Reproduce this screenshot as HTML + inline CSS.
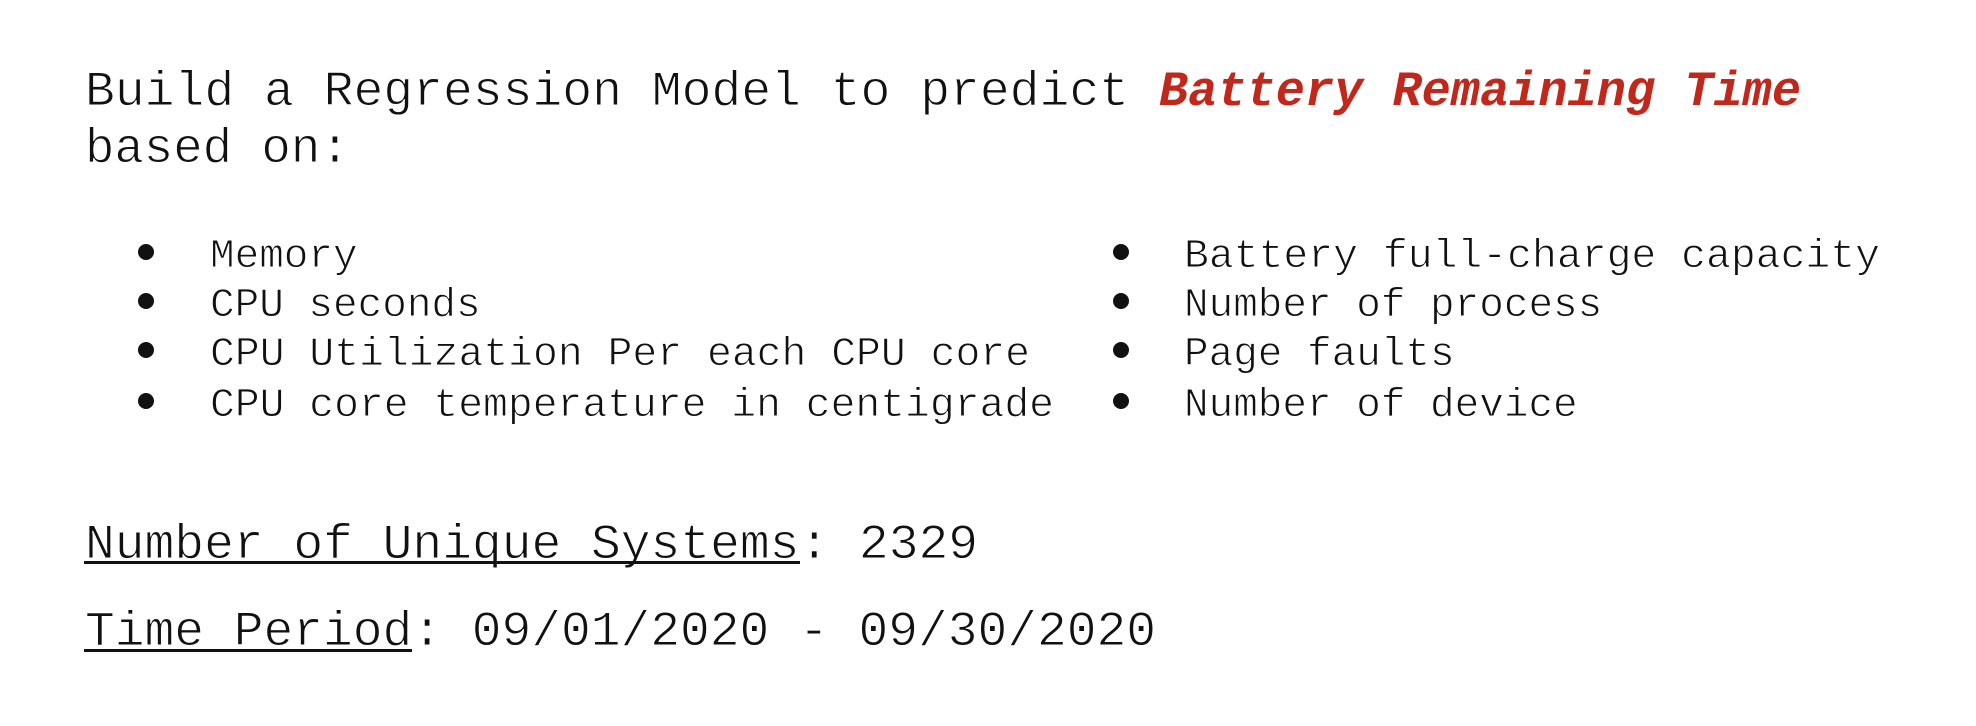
<!DOCTYPE html>
<html><head><meta charset="utf-8"><style>
html,body{margin:0;padding:0;background:#fff;}
svg{display:block}
text{font-family:"Liberation Mono",monospace;fill:#111;stroke:#fff;stroke-width:0.9px;}
</style></head><body>
<svg width="1976" height="726" viewBox="0 0 1976 726">
<text x="85" y="105" font-size="49" textLength="1044" lengthAdjust="spacingAndGlyphs">Build a Regression Model to predict</text>
<text x="1159" y="105" font-size="49" font-weight="bold" font-style="italic" style="fill:#c0281c;stroke:none" textLength="642" lengthAdjust="spacingAndGlyphs">Battery Remaining Time</text>
<text x="85" y="162" font-size="49">based on:</text>

<g font-size="41">
<circle cx="146" cy="252" r="8" fill="#111"/><text x="210" y="267">Memory</text>
<circle cx="146" cy="301" r="8" fill="#111"/><text x="210" y="316">CPU seconds</text>
<circle cx="146" cy="350" r="8" fill="#111"/><text x="210" y="365" textLength="820" lengthAdjust="spacingAndGlyphs">CPU Utilization Per each CPU core</text>
<circle cx="146" cy="401" r="8" fill="#111"/><text x="210" y="416" textLength="844" lengthAdjust="spacingAndGlyphs">CPU core temperature in centigrade</text>

<circle cx="1121" cy="252" r="8" fill="#111"/><text x="1184" y="267" textLength="696" lengthAdjust="spacingAndGlyphs">Battery full-charge capacity</text>
<circle cx="1121" cy="301" r="8" fill="#111"/><text x="1184" y="316">Number of process</text>
<circle cx="1121" cy="350" r="8" fill="#111"/><text x="1184" y="365">Page faults</text>
<circle cx="1121" cy="401" r="8" fill="#111"/><text x="1184" y="416">Number of device</text>
</g>

<text x="85" y="558" font-size="49" textLength="893" lengthAdjust="spacingAndGlyphs">Number of Unique Systems: 2329</text>
<rect x="84" y="561" width="716" height="3" fill="#111"/>
<text x="85" y="645" font-size="49" textLength="1071" lengthAdjust="spacingAndGlyphs">Time Period: 09/01/2020 - 09/30/2020</text>
<rect x="84" y="649" width="328" height="3" fill="#111"/>
</svg>
</body></html>
